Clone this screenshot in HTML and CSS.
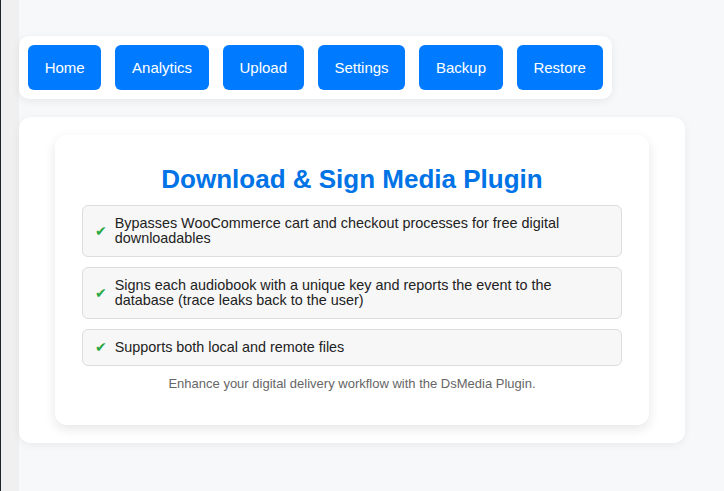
FILE: index.html
```html
<!DOCTYPE html>
<html lang="en">
<head>
<meta charset="utf-8">
<title>DsMedia Plugin</title>
<link rel="stylesheet" href="styles.css">
</head>
<body>
<div class="admin-edge"></div>
<div class="admin-gutter"></div>
<main class="content">
  <nav class="nav">
    <a class="nav-btn" href="#">Home</a>
    <a class="nav-btn" href="#">Analytics</a>
    <a class="nav-btn" href="#">Upload</a>
    <a class="nav-btn" href="#">Settings</a>
    <a class="nav-btn" href="#">Backup</a>
    <a class="nav-btn" href="#">Restore</a>
  </nav>
  <section class="panel">
    <div class="card">
      <h2 class="title">Download &amp; Sign Media Plugin</h2>
      <ul class="features">
        <li class="feature"><span class="check">✔</span><span>Bypasses WooCommerce cart and checkout processes for free digital downloadables</span></li>
        <li class="feature"><span class="check">✔</span><span>Signs each audiobook with a unique key and reports the event to the database (trace leaks back to the user)</span></li>
        <li class="feature"><span class="check">✔</span><span>Supports both local and remote files</span></li>
      </ul>
      <p class="note">Enhance your digital delivery workflow with the DsMedia Plugin.</p>
    </div>
  </section>
</main>
</body>
</html>
```
FILE: styles.css
```css
html, body {
  margin: 0;
  height: 100%;
}
body {
  display: flex;
  font-family: "Liberation Sans", Arial, sans-serif;
  background: #f7f8fa;
  overflow: hidden;
}
.admin-edge {
  width: 1px;
  background: #1d2327;
  flex: none;
}
.admin-gutter {
  width: 18px;
  background: #f0f0f1;
  flex: none;
}
.content {
  flex: 1;
  padding: 36px 39px 0 0;
  background: #f7f8fa;
}
.nav {
  display: inline-flex;
  gap: 14px;
  padding: 9px;
  background: #fff;
  border-radius: 10px;
  box-shadow: 0 2px 8px rgba(0, 0, 0, 0.07);
}
.nav-btn {
  display: block;
  height: 45px;
  line-height: 45px;
  padding: 0 16.7px;
  background: #007bff;
  color: #fff;
  font-size: 15px;
  text-decoration: none;
  border-radius: 6px;
}
.panel {
  margin-top: 18px;
  background: #fff;
  border-radius: 12px;
  padding: 18px 36px;
  box-shadow: 0 2px 8px rgba(0, 0, 0, 0.06);
}
.card {
  background: #fff;
  border-radius: 12px;
  padding: 29px 27px 33px;
  box-shadow: 0 4px 12px rgba(0, 0, 0, 0.1);
}
.title {
  margin: 0 0 11px;
  text-align: center;
  color: #0073e6;
  font-size: 26px;
  line-height: 30px;
  font-weight: bold;
}
.features {
  list-style: none;
  margin: 0;
  padding: 0;
  display: flex;
  flex-direction: column;
  gap: 10px;
}
.feature {
  display: flex;
  gap: 8px;
  align-items: center;
  padding: 10px 12px;
  background: #f7f7f7;
  border: 1px solid #dddddd;
  border-radius: 6px;
  color: #222;
  font-size: 14.4px;
  line-height: 15px;
}
.check {
  color: #28a745;
  font-family: "DejaVu Sans", sans-serif;
  font-size: 14px;
  flex: none;
}
.note {
  margin: 10px 0 0;
  text-align: center;
  color: #666;
  font-size: 13px;
  line-height: 16px;
}
```
